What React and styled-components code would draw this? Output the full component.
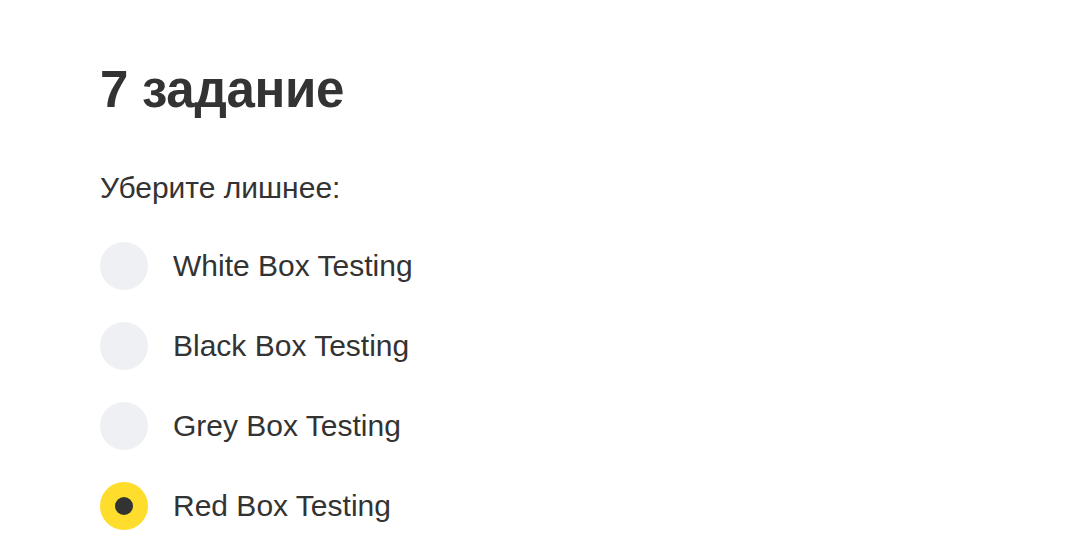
import React, { useState } from "react";
import styled, { createGlobalStyle } from "styled-components";

const options = [
    "White Box Testing",
    "Black Box Testing",
    "Grey Box Testing",
    "Red Box Testing",
];

const App = () => {
    const [selected, setSelected] = useState(3);
    return (
        <>
            <GlobalStyle />
            <Page>
                <Title>7 задание</Title>
                <Question>Уберите лишнее:</Question>
                <OptionList>
                    {options.map((label, i) => (
                        <Option key={label} onClick={() => setSelected(i)}>
                            <Radio checked={selected === i} />
                            <Label>{label}</Label>
                        </Option>
                    ))}
                </OptionList>
            </Page>
        </>
    );
};

const GlobalStyle = createGlobalStyle`
    body {
        margin: 0;
        background: #ffffff;
        font-family: "Liberation Sans", Arial, sans-serif;
        color: #333333;
    }
`;
const Page = styled.div`
    display: flex;
    flex-direction: column;
    padding: 58px 100px 0;
`;
const Title = styled.h1`
    margin: 0;
    font-size: 51px;
    font-weight: 700;
    line-height: 64px;
    letter-spacing: -0.3px;
`;
const Question = styled.p`
    margin: 48px 0 0;
    font-size: 30px;
    line-height: 36px;
`;
const OptionList = styled.div`
    display: flex;
    flex-direction: column;
    gap: 32px;
    margin-top: 36px;
`;
const Option = styled.label`
    display: flex;
    align-items: center;
    gap: 25px;
    cursor: pointer;
`;
const Radio = styled.span`
    width: 48px;
    height: 48px;
    border-radius: 50%;
    flex-shrink: 0;
    display: flex;
    align-items: center;
    justify-content: center;
    background: ${p => (p.checked ? "#ffdd2d" : "#eff0f3")};
    &::after {
        content: "";
        width: 18px;
        height: 18px;
        border-radius: 50%;
        background: #333333;
        display: ${p => (p.checked ? "block" : "none")};
    }
`;
const Label = styled.span`
    font-size: 30px;
    line-height: 36px;
`;

export default App;
